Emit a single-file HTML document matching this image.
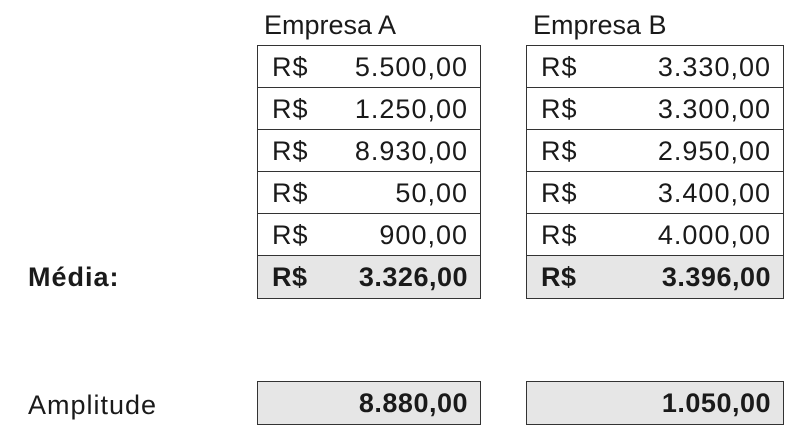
<!DOCTYPE html>
<html><head><style>
body{margin:0;width:808px;height:444px;background:#fff;font-family:"Liberation Sans",sans-serif;color:#1a1a1a;position:relative;overflow:hidden}
.t{position:absolute;font-size:27px;line-height:1}
.box{position:absolute;border:1.5px solid #333;box-sizing:border-box}
.row{position:absolute;left:0;right:0;height:42px;border-bottom:1.5px solid #333;box-sizing:border-box}
.row span{position:absolute;top:8px;font-size:27px;line-height:1;letter-spacing:1px}
.l{left:14px}.r{right:12px}
.g{background:#e6e6e6;font-weight:bold}
.g span{letter-spacing:0.5px}
</style></head><body>
<div class="t" style="left:264px;top:12px">Empresa A</div>
<div class="t" style="left:533px;top:12px">Empresa B</div>
<div class="t" style="left:28px;top:264px;font-weight:bold;letter-spacing:1px">Média:</div>
<div class="t" style="left:28px;top:392px;letter-spacing:1px">Amplitude</div>

<div class="box" style="left:257px;top:45px;width:224px;height:254px">
<div class="row" style="top:0"><span class="l">R$</span><span class="r">5.500,00</span></div>
<div class="row" style="top:42px"><span class="l">R$</span><span class="r">1.250,00</span></div>
<div class="row" style="top:84px"><span class="l">R$</span><span class="r">8.930,00</span></div>
<div class="row" style="top:126px"><span class="l">R$</span><span class="r">50,00</span></div>
<div class="row" style="top:168px"><span class="l">R$</span><span class="r">900,00</span></div>
<div class="row g" style="top:210px;height:42px;border-bottom:none"><span class="l">R$</span><span class="r">3.326,00</span></div>
</div>

<div class="box" style="left:526px;top:45px;width:258px;height:254px">
<div class="row" style="top:0"><span class="l">R$</span><span class="r">3.330,00</span></div>
<div class="row" style="top:42px"><span class="l">R$</span><span class="r">3.300,00</span></div>
<div class="row" style="top:84px"><span class="l">R$</span><span class="r">2.950,00</span></div>
<div class="row" style="top:126px"><span class="l">R$</span><span class="r">3.400,00</span></div>
<div class="row" style="top:168px"><span class="l">R$</span><span class="r">4.000,00</span></div>
<div class="row g" style="top:210px;height:42px;border-bottom:none"><span class="l">R$</span><span class="r">3.396,00</span></div>
</div>

<div class="box g" style="left:257px;top:381px;width:224px;height:44px"><div class="row" style="top:0;border:none"><span class="r">8.880,00</span></div></div>
<div class="box g" style="left:526px;top:381px;width:258px;height:44px"><div class="row" style="top:0;border:none"><span class="r">1.050,00</span></div></div>
</body></html>
